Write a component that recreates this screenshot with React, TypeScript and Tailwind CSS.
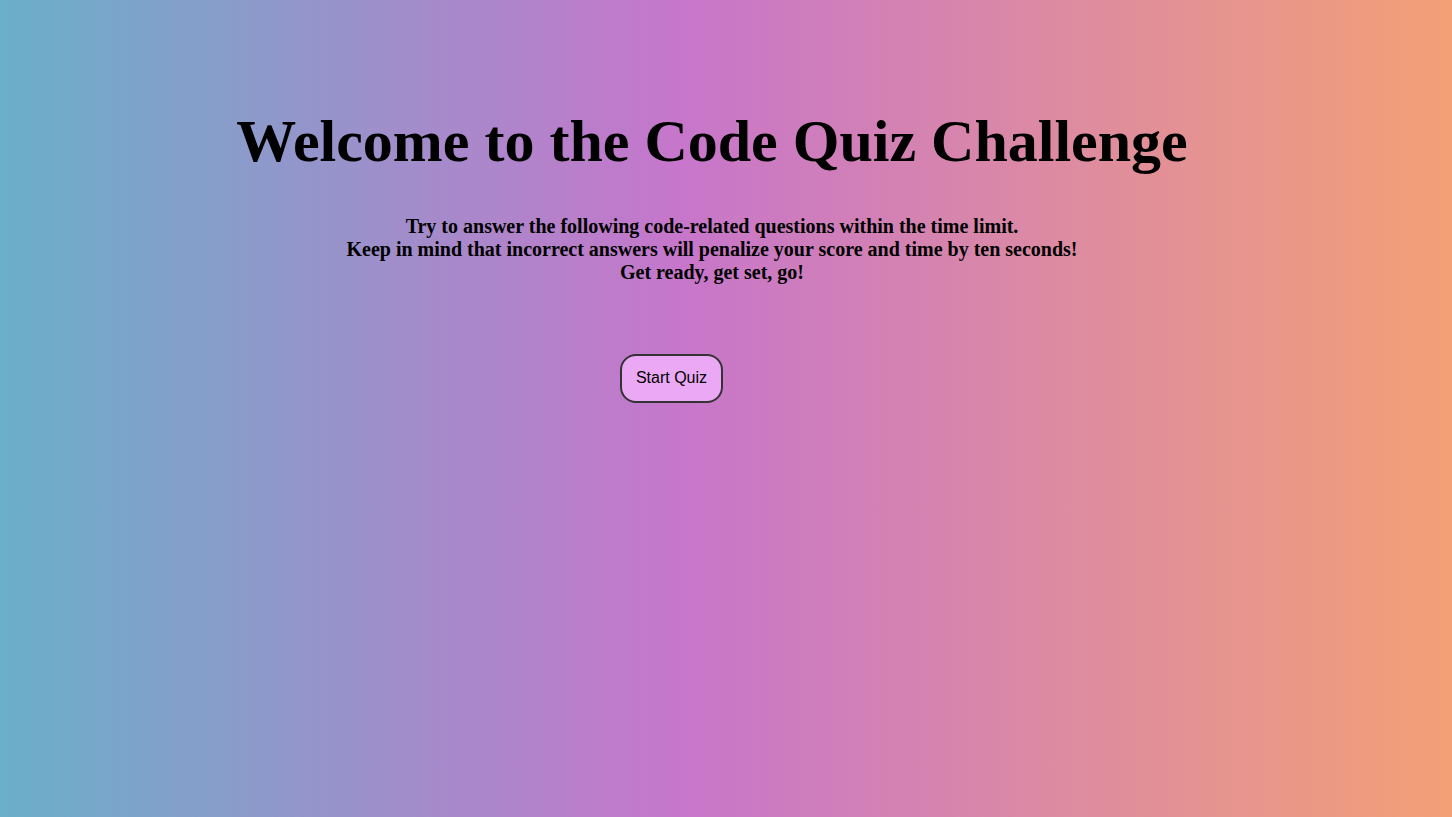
export default function App() {
    return (
        <div className="min-h-[817px] w-full bg-[linear-gradient(to_right,#6aafca,#c776cb_47%,#f3a076)] font-['Liberation_Serif',serif] text-black">
            <div className="flex flex-col items-center pr-[28px] pt-[106px]">
                <h1 className="text-[60px] font-bold leading-[70px]">Welcome to the Code Quiz Challenge</h1>
                <p className="mt-[39px] text-center text-[20px] font-bold leading-[23px]">
                    Try to answer the following code-related questions within the time limit.
                    <br />
                    Keep in mind that incorrect answers will penalize your score and time by ten seconds!
                    <br />
                    Get ready, get set, go!
                </p>
            </div>
            <div className="flex pl-[620px] pt-[70px]">
                <button className="h-[49px] w-[103px] rounded-[16px] border-2 border-[#333] bg-[#eba9f5] pb-[2px] font-['Liberation_Sans',sans-serif] text-[16px] text-black">
                    Start Quiz
                </button>
            </div>
        </div>
    );
}
